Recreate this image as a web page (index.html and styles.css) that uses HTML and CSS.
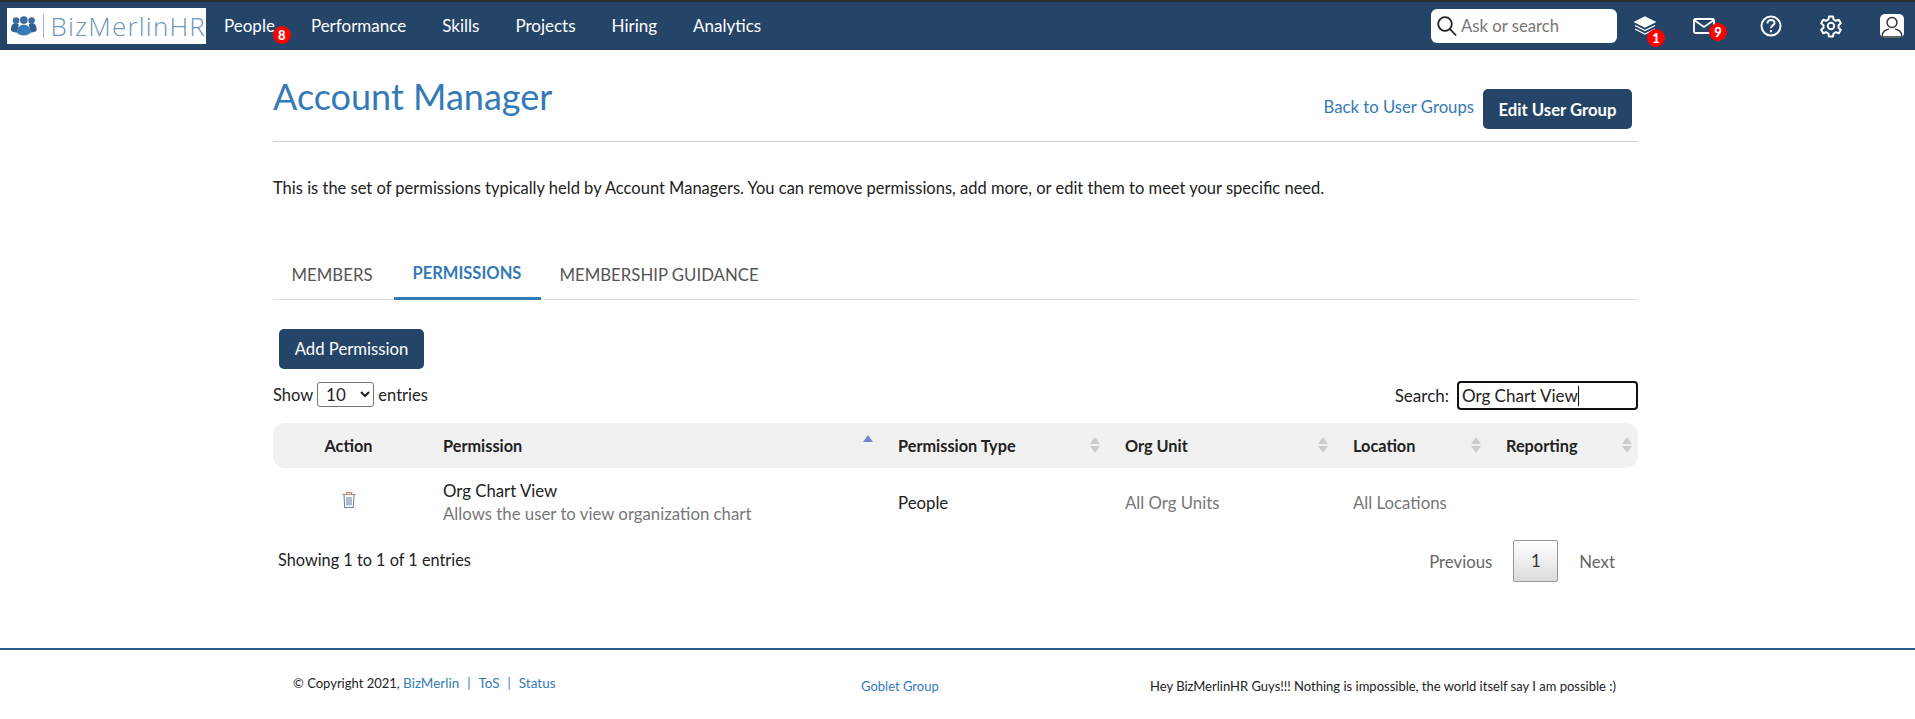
FILE: index.html
```html
<!DOCTYPE html>
<html lang="en">
<head>
  <meta charset="UTF-8">
  <title>Account Manager</title>
  <link rel="stylesheet" href="styles.css">
</head>
<body>
  <nav class="navbar">
    <a class="logo">
      <svg class="logo-mark" width="28" height="22" viewBox="0 0 28 22">
        <circle cx="5.500" cy="5" r="3.600" fill="#3b6c9c"/>
        <circle cx="22.500" cy="5" r="3.600" fill="#3b6c9c"/>
        <circle cx="14" cy="4.500" r="4.200" fill="#3b6c9c"/>
        <path d="M0 15c0-5 2-7 5.500-7 2 0 3 1 3 2l-2 8C3 18 0 17 0 15zM28 15c0-5-2-7-5.500-7-2 0-3 1-3 2l2 8c3.500 0 6.500-1 6.500-3z" fill="#2f5f8e"/>
        <path d="M6.500 18.500C6.500 12 10 9.500 14 9.500s7.500 2.500 7.500 9c-3 4-12 4-15 0z" fill="#337ab7"/>
      </svg>
      <span class="logo-bar"></span>
      <span class="logo-text">BizMerlinHR</span>
    </a>
    <ul class="nav-links">
      <li class="nav-people">People<span class="badge">8</span></li>
      <li>Performance</li>
      <li>Skills</li>
      <li>Projects</li>
      <li>Hiring</li>
      <li>Analytics</li>
    </ul>
    <div class="nav-right">
      <div class="ask">
        <svg width="22" height="22" viewBox="0 0 22 22" fill="none" stroke="#222" stroke-width="1.800">
          <circle cx="9" cy="9" r="6.800"/>
          <path d="M14 14l6 6.500"/>
        </svg>
        <span>Ask or search</span>
      </div>
      <div class="nav-icon icon-layers">
        <svg width="24" height="22" viewBox="0 0 24 22" fill="none" stroke="#fff" stroke-width="1.300">
          <path d="M12 2L22 7l-10 5L2 7z" fill="#fff"/>
          <path d="M2 10.500l10 5 10-5M2 14l10 5 10-5"/>
        </svg>
        <span class="badge">1</span>
      </div>
      <div class="nav-icon icon-mail">
        <svg width="24" height="18" viewBox="0 0 24 18" fill="none" stroke="#fff" stroke-width="1.800">
          <rect x="2" y="2" width="20" height="14" rx="1.500"/>
          <path d="M2 3l10 7 10-7"/>
        </svg>
        <span class="badge">9</span>
      </div>
      <div class="nav-icon icon-help">
        <svg width="24" height="24" viewBox="0 0 24 24" fill="none" stroke="#fff" stroke-width="2">
          <circle cx="12" cy="12" r="9.500"/>
          <path d="M8.500 9.500c0-5 7.500-4.500 7-.3-.3 2.300-3.500 2.300-3.500 5"/>
          <path d="M12 16v2.200"/>
        </svg>
      </div>
      <div class="nav-icon icon-gear">
        <svg width="24" height="24" viewBox="0 0 24 24" fill="none" stroke="#fff" stroke-width="2" stroke-linejoin="round">
          <circle cx="12" cy="12" r="3.200"/>
          <path d="M10 2.500h4l.6 3 2.300 1.300 2.900-1 2 3.500-2.300 2v2.400l2.300 2-2 3.500-2.900-1-2.300 1.300-.6 3h-4l-.6-3-2.300-1.300-2.900 1-2-3.500 2.300-2v-2.400l-2.300-2 2-3.500 2.900 1 2.300-1.300z"/>
        </svg>
      </div>
      <div class="nav-icon icon-user">
        <svg width="24" height="24" viewBox="0 0 24 24">
          <rect width="24" height="24" rx="5" fill="#fff"/>
          <circle cx="12" cy="8.500" r="5" fill="none" stroke="#333" stroke-width="1.500"/>
          <path d="M2 23c0-6 4-7 7-8M22 23c0-6-4-7-7-8M2 23h20" fill="none" stroke="#333" stroke-width="1.500"/>
        </svg>
      </div>
    </div>
  </nav>

  <main class="container">
    <header class="page-header">
      <h1>Account Manager</h1>
      <div class="header-actions">
        <a class="link-back">Back to User Groups</a>
        <a class="btn btn-edit">Edit User Group</a>
      </div>
    </header>

    <p class="intro">This is the set of permissions typically held by Account Managers. You can remove permissions, add more, or edit them to meet your specific need.</p>

    <ul class="tabs">
      <li class="tab-first">MEMBERS</li>
      <li class="active">PERMISSIONS</li>
      <li>MEMBERSHIP GUIDANCE</li>
    </ul>

    <a class="btn btn-add">Add Permission</a>

    <div class="table-controls">
      <label class="length">Show
        <select>
          <option>10</option>
        </select>
        entries</label>
      <label class="search">Search:
        <span class="search-box">Org Chart View<span class="caret"></span></span>
      </label>
    </div>

    <table class="perm-table">
      <thead>
        <tr>
          <th class="col-action">Action</th>
          <th class="col-perm sorted">Permission</th>
          <th class="col-type sortable">Permission Type</th>
          <th class="col-org sortable">Org Unit</th>
          <th class="col-loc sortable">Location</th>
          <th class="col-rep sortable">Reporting</th>
        </tr>
      </thead>
      <tbody>
        <tr>
          <td class="col-action">
            <svg width="16" height="18" viewBox="0 0 16 18" fill="none" stroke="#6f87a6" stroke-width="1.100">
              <path d="M1.500 3.500h13" stroke="#c08468"/>
              <path d="M5.500 3.500V1.500h5v2" stroke="#c08468"/>
              <path d="M3 3.500l.7 13h8.600l.7-13"/>
              <path d="M6 6v8.500M8 6v8.500M10 6v8.500"/>
            </svg>
          </td>
          <td>
            <div class="perm-name">Org Chart View</div>
            <div class="perm-desc">Allows the user to view organization chart</div>
          </td>
          <td class="cell-type">People</td>
          <td class="cell-muted">All Org Units</td>
          <td class="cell-muted">All Locations</td>
          <td></td>
        </tr>
      </tbody>
    </table>

    <div class="table-footer">
      <div class="info">Showing 1 to 1 of 1 entries</div>
      <div class="pager">
        <span>Previous</span>
        <span class="page-current">1</span>
        <span>Next</span>
      </div>
    </div>
  </main>

  <footer class="footer">
    <div class="footer-left">© Copyright 2021, <a>BizMerlin</a><i>|</i><a>ToS</a><i>|</i><a>Status</a></div>
    <div class="footer-mid"><a>Goblet Group</a></div>
    <div class="footer-right">Hey BizMerlinHR Guys!!! Nothing is impossible, the world itself say I am possible :)</div>
  </footer>
</body>
</html>
```

FILE: styles.css
```css
* {
  box-sizing: border-box;
}
body {
  margin: 0;
  background-color: #fff;
  color: #222;
  font-family: Lato, "Open Sans", sans-serif;
  font-size: 16.7px;
}
a {
  color: #337ab7;
  text-decoration: none;
}

/* top bar */
.navbar {
  display: flex;
  align-items: center;
  height: 50px;
  padding-left: 7px;
  background-color: #244568;
  border-top: 2px solid #2b2b2b;
  color: #fff;
}
.logo {
  display: flex;
  align-items: center;
  width: 199px;
  height: 36px;
  padding-left: 4px;
  background-color: #fff;
}
.logo-bar {
  width: 1px;
  height: 24px;
  margin: 0 7px 0 6px;
  background-color: #9db8d2;
}
.logo-text {
  color: #6d96bb;
  font-family: "Open Sans", sans-serif;
  font-size: 26px;
  font-weight: 300;
  letter-spacing: 1.2px;
  white-space: nowrap;
}
.nav-links {
  display: flex;
  gap: 36px;
  margin: -2px 0 0 18px;
  padding: 0;
  list-style: none;
  font-size: 17px;
}
.nav-links li {
  position: relative;
}
.badge {
  position: absolute;
  display: flex;
  align-items: center;
  justify-content: center;
  width: 18px;
  height: 18px;
  border-radius: 50%;
  background-color: #f00;
  color: #fff;
  font-size: 13px;
  font-weight: 900;
}
.nav-people .badge {
  right: -16px;
  top: 11px;
}
.nav-right {
  display: flex;
  align-items: center;
  margin-left: auto;
}
.ask {
  display: flex;
  align-items: center;
  gap: 3px;
  width: 186px;
  height: 34px;
  margin-right: 16px;
  padding-left: 5px;
  background-color: #fff;
  border-radius: 6px;
  color: #777;
}
.nav-icon {
  position: relative;
  display: flex;
  align-items: center;
  justify-content: center;
  width: 24px;
  height: 24px;
}
.icon-layers .badge {
  right: -8px;
  bottom: -9px;
}
.icon-mail {
  margin-left: 35px;
}
.icon-mail .badge {
  right: -11px;
  top: 9px;
}
.icon-help {
  margin-left: 43px;
}
.icon-gear {
  margin-left: 36px;
}
.icon-user {
  margin: 0 11px 0 37px;
}

/* page */
.container {
  width: 1365px;
  margin-left: 273px;
}
.page-header {
  display: flex;
  justify-content: space-between;
  height: 92px;
  border-bottom: 1px solid #ccc;
}
.page-header h1 {
  margin: 24px 0 0;
  color: #337ab7;
  font-size: 36px;
  font-weight: 400;
  line-height: 44px;
}
.header-actions {
  display: flex;
  align-items: flex-start;
  gap: 9px;
  padding: 39px 6px 0 0;
}
.link-back {
  padding-top: 8px;
}
.btn {
  display: inline-block;
  background-color: #244568;
  border-radius: 5px;
  color: #fff;
  text-align: center;
}
.btn-edit {
  width: 149px;
  height: 40px;
  font-weight: 700;
  line-height: 42px;
}
.intro {
  height: 19px;
  margin: 37px 0 0;
  font-size: 16.5px;
  line-height: 19px;
}
.tabs {
  display: flex;
  height: 56px;
  margin: 46px 0 0;
  padding: 0;
  border-bottom: 1px solid #ddd;
  list-style: none;
  color: #555;
  font-size: 16.8px;
}
.tabs li {
  height: 56px;
  padding: 20px 18.500px 0;
}
.tabs .tab-first {
  padding-right: 21.500px;
}
.tabs .active {
  padding: 19px 19.500px 0 18.500px;
  border-bottom: 3px solid #337ab7;
  color: #337ab7;
  font-size: 16.500px;
  font-weight: 700;
}
.btn-add {
  display: block;
  width: 145px;
  height: 40px;
  margin: 29px 0 0 6px;
  line-height: 40px;
}
.table-controls {
  display: flex;
  justify-content: space-between;
  height: 54px;
  padding-top: 12px;
}
.length {
  padding-top: 1px;
  font-size: 16.5px;
}
.length select {
  width: 57px;
  height: 25px;
  padding-left: 4px;
  background-color: #fff;
  border: 1px solid #767676;
  border-radius: 3px;
  color: #222;
  font-family: inherit;
  font-size: 17px;
}
.search {
  display: flex;
  align-items: center;
  gap: 8px;
  height: 29px;
  font-size: 17px;
}
.search-box {
  display: flex;
  align-items: center;
  width: 181px;
  height: 29px;
  padding-left: 3px;
  border: 2px solid #111;
  border-radius: 4px;
}
.caret {
  width: 1px;
  height: 20px;
  background-color: #111;
}

/* table */
.perm-table {
  width: 100%;
  border-collapse: collapse;
  table-layout: fixed;
}
.perm-table th {
  position: relative;
  height: 45px;
  padding: 0;
  background-color: #f1f1f1;
  font-size: 16.3px;
  font-weight: 700;
  text-align: left;
}
.perm-table th:first-child {
  border-radius: 12px 0 0 12px;
}
.perm-table th:last-child {
  border-radius: 0 12px 12px 0;
}
.perm-table td {
  height: 68px;
  padding: 0;
  color: #222;
  font-size: 16.8px;
}
.perm-table .col-action {
  width: 170px;
  padding-right: 19px;
  text-align: center;
}
.col-perm {
  width: 455px;
}
.col-type {
  width: 227px;
}
.col-org {
  width: 228px;
}
.col-loc {
  width: 153px;
}
.col-rep {
  width: 132px;
}
.sortable::after,
.sorted::after {
  content: "";
  position: absolute;
  right: 25px;
  top: 14px;
  border: 5px solid transparent;
  border-bottom: 7px solid #ccc;
  border-top: 0;
}
.sortable::before {
  content: "";
  position: absolute;
  right: 25px;
  top: 23px;
  border: 5px solid transparent;
  border-top: 7px solid #ccc;
  border-bottom: 0;
}
.col-rep::after,
.col-rep::before {
  right: 6px;
}
.sorted::after {
  top: 12px;
  border-bottom-color: #7f7fd5;
}
.perm-name,
.perm-desc {
  line-height: 23px;
}
.perm-desc {
  color: #777;
}
.perm-table .cell-muted {
  color: #777;
}
.table-footer {
  display: flex;
  justify-content: space-between;
  align-items: flex-start;
  height: 112px;
  padding: 4px 23px 0 5px;
  font-size: 16.8px;
}
.info {
  padding-top: 10px;
  font-size: 16.3px;
}
.pager {
  display: flex;
  align-items: center;
  gap: 21px;
  color: #666;
}
.page-current {
  width: 45px;
  height: 42px;
  background: linear-gradient(#fff, #dcdcdc);
  border: 1px solid #979797;
  border-radius: 2px;
  color: #333;
  line-height: 40px;
  text-align: center;
}

/* footer */
.footer {
  display: flex;
  height: 71px;
  padding-top: 25px;
  border-top: 2px solid #2b5b8a;
  color: #222;
  font-size: 13px;
}
.footer-left {
  width: 861px;
  padding-left: 293px;
  white-space: nowrap;
}
.footer-left a {
  font-size: 13.5px;
}
.footer-left i {
  margin: 0 8px;
  color: #337ab7;
  font-style: normal;
}
.footer-mid {
  width: 289px;
  padding-top: 3px;
}
.footer-right {
  padding-top: 3px;
  white-space: nowrap;
}
```
